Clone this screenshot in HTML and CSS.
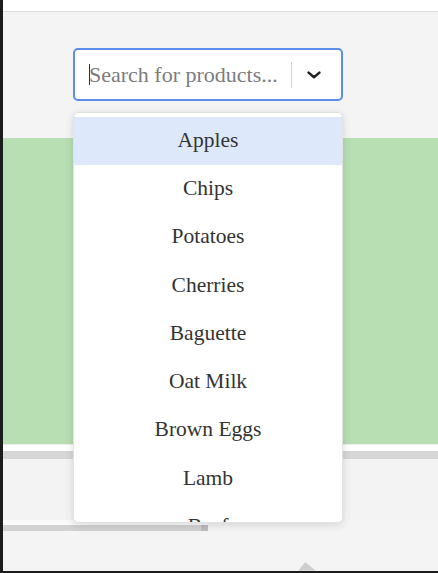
FILE: index.html
```html
<!DOCTYPE html>
<html lang="en">
<head>
<meta charset="utf-8">
<title>Product search</title>
<link rel="stylesheet" href="styles.css">
</head>
<body>
<div class="page">
  <header class="topbar"></header>
  <div class="search-wrap">
    <div class="select">
      <div class="control">
        <div class="field"><span class="caret"></span><span class="placeholder">Search for products...</span></div>
        <span class="separator"></span>
        <div class="indicator">
          <svg width="14" height="8" viewBox="0 0 14 8" aria-hidden="true"><path d="M1.6 1.6 L7 6.3 L12.4 1.6" fill="none" stroke="#222" stroke-width="2.5" stroke-linecap="round" stroke-linejoin="round"/></svg>
        </div>
      </div>
      <ul class="menu">
        <li class="option active">Apples</li>
        <li class="option">Chips</li>
        <li class="option">Potatoes</li>
        <li class="option">Cherries</li>
        <li class="option">Baguette</li>
        <li class="option">Oat Milk</li>
        <li class="option">Brown Eggs</li>
        <li class="option">Lamb</li>
        <li class="option">Beef</li>
      </ul>
    </div>
  </div>
  <section class="panel"></section>
  <div class="shelf"></div>
  <div class="lower"></div>
  <div class="rail"><span class="rail-end"></span></div>
  <div class="footer-row"><span class="peak"></span></div>
</div>
</body>
</html>
```
FILE: styles.css
```css
* { box-sizing: border-box; }
html, body { margin: 0; padding: 0; }
body {
  font-family: "Liberation Serif", "Times New Roman", serif;
  background: #f4f4f4;
}
.page {
  width: 438px;
  height: 573px;
  overflow: hidden;
  background: #f4f4f4;
  border-left: 3px solid #1c1c1c;
  border-bottom: 2px solid #1c1c1c;
  display: flex;
  flex-direction: column;
}
.topbar {
  height: 12px;
  flex: none;
  background: #ffffff;
  border-bottom: 1px solid #dcdcdc;
}
.search-wrap {
  flex: none;
  padding: 36px 0 0 70px;
  position: relative;
  z-index: 2;
}
.select {
  position: relative;
  width: 270px;
}
.control {
  height: 53px;
  background: #fff;
  border: 2px solid #5b8def;
  border-radius: 5px;
  display: flex;
  align-items: center;
  padding: 0 4px 0 14px;
}
.field {
  flex: 1;
  display: flex;
  align-items: center;
  height: 100%;
  min-width: 0;
}
.caret {
  width: 1px;
  height: 21px;
  background: #333;
  margin-right: -1px;
}
.placeholder {
  font-size: 22px;
  color: #7c7c7c;
  white-space: nowrap;
  line-height: 1;
}
.separator {
  width: 1px;
  height: 26px;
  background: #cfcfcf;
  flex: none;
}
.indicator {
  width: 45px;
  flex: none;
  display: flex;
  align-items: center;
  justify-content: center;
  padding-top: 1px;
  padding-right: 2px;
}
.indicator svg { display: block; }
.menu {
  position: absolute;
  top: calc(100% + 11px);
  left: 0;
  width: 270px;
  height: 411px;
  margin: 0;
  padding: 4px 0 0;
  list-style: none;
  background: #fff;
  border: 1px solid #e2e2e2;
  border-radius: 5px;
  box-shadow: 0 2px 9px rgba(0, 0, 0, 0.13);
  overflow: hidden;
}
.option {
  height: 48.3px;
  display: flex;
  align-items: center;
  justify-content: center;
  font-size: 21.5px;
  color: #333;
  padding-bottom: 2px;
}
.option.active { background: #dee8fb; }
.panel {
  flex: none;
  height: 306px;
  margin-top: 37px;
  background: #b7dfb3;
}
.shelf {
  flex: none;
  height: 15px;
  background: #fff;
  border-top: 1px solid #ececec;
  border-bottom: 8px solid #d6d6d6;
}
.lower {
  flex: none;
  height: 61px;
  background: #f3f3f3;
}
.rail {
  flex: none;
  width: 205px;
  height: 11px;
  background: #d2d2d2;
  border-top: 5px solid #fafafa;
  display: flex;
  justify-content: flex-end;
}
.rail-end {
  width: 7px;
  background: #bcbcbc;
}
.footer-row {
  flex: 1;
  display: flex;
  align-items: flex-end;
  padding-left: 295px;
}
.peak {
  width: 18px;
  height: 9px;
  background: #cdcdcd;
  clip-path: polygon(40% 0, 100% 100%, 0 100%);
  filter: blur(1px);
}
```
